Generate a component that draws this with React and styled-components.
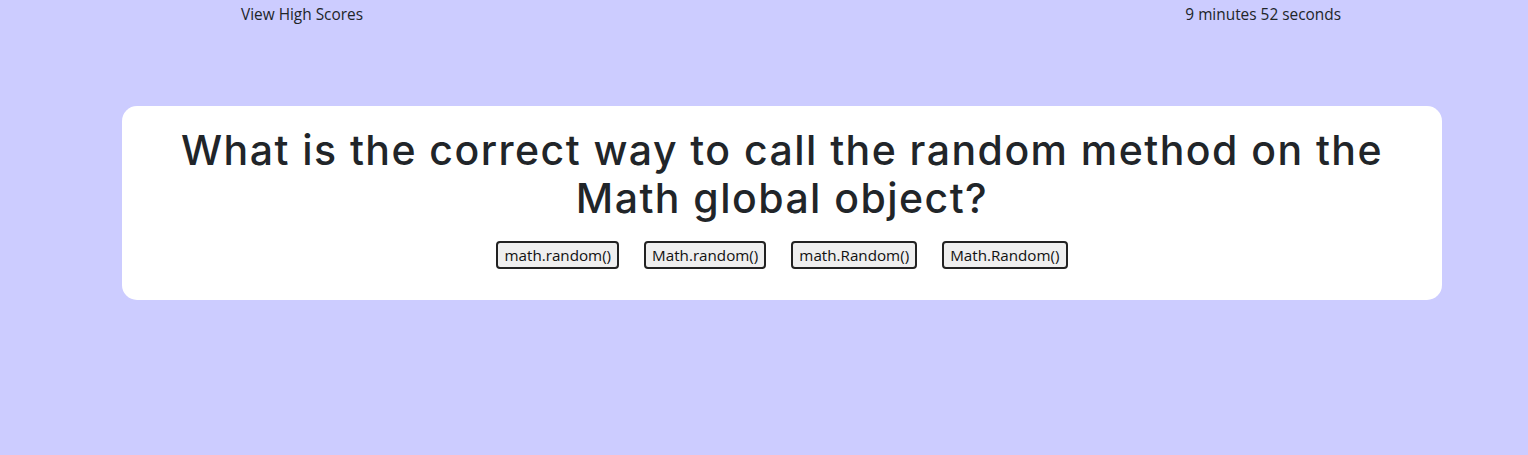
import React from "react";
import styled, { createGlobalStyle } from "styled-components";

const Global = createGlobalStyle`
  html, body { margin: 0; padding: 0; }
  body {
    background: #ccccff;
    font-family: "Open Sans", "Noto Sans", sans-serif;
    color: #212529;
  }
`;

const Page = styled.div`
  width: 1528px;
  min-height: 455px;
  display: flex;
  flex-direction: column;
`;

const TopBar = styled.header`
  display: flex;
  justify-content: space-between;
  padding: 4px 187px 0 241px;
  font-size: 15.4px;
  line-height: 22px;
  color: #212529;
`;

const Link = styled.span`
  cursor: pointer;
`;

const Card = styled.main`
  margin: 80px 0 0 122px;
  width: 1320px;
  background: #ffffff;
  border-radius: 15px;
  padding: 20px 0 31px;
  display: flex;
  flex-direction: column;
  align-items: center;
  box-sizing: border-box;
`;

const Question = styled.h1`
  margin: 0 0 19px;
  width: 1240px;
  text-align: center;
  font-family: "Inter", "Lato", sans-serif;
  font-weight: 500;
  font-size: 41px;
  letter-spacing: 1.45px;
  line-height: 48px;
  color: #212529;
`;

const Choices = styled.div`
  display: flex;
  gap: 25px;
`;

const Choice = styled.button`
  font-family: "Open Sans", sans-serif;
  font-size: 15.2px;
  height: 28px;
  padding: 0 6px;
  background: #efefef;
  border: 2px solid #222;
  border-radius: 4px;
  color: #111;
  cursor: pointer;
`;

const choices = ["math.random()", "Math.random()", "math.Random()", "Math.Random()"];

export default function App() {
  return (
    <Page>
      <Global />
      <TopBar>
        <Link>View High Scores</Link>
        <span>9 minutes 52 seconds</span>
      </TopBar>
      <Card>
        <Question>What is the correct way to call the random method on the Math global object?</Question>
        <Choices>
          {choices.map((c) => (
            <Choice key={c}>{c}</Choice>
          ))}
        </Choices>
      </Card>
    </Page>
  );
}
